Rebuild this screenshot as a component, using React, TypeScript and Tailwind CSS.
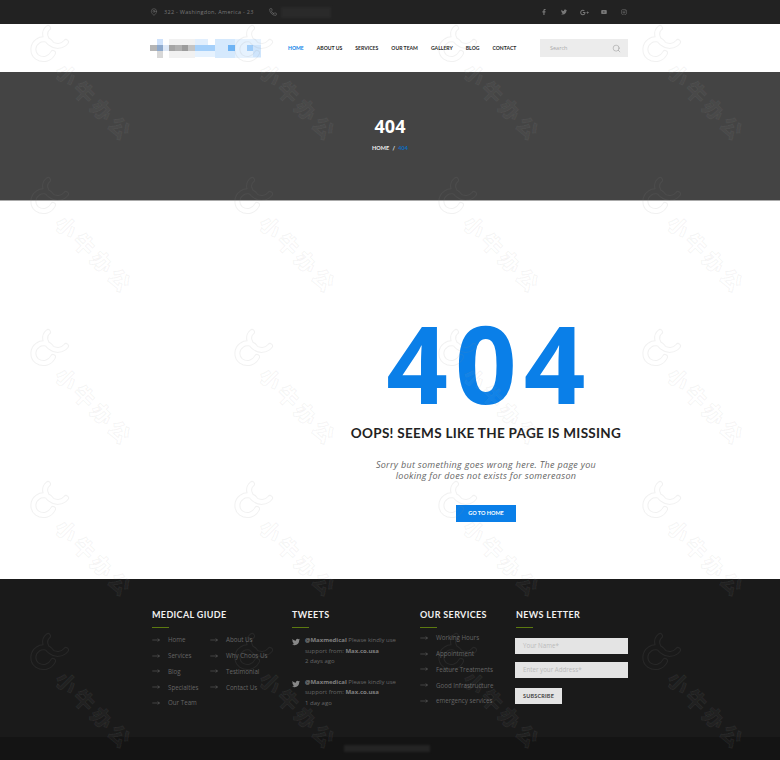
import { useId } from 'react';
import { MapPin, MoveRight, Phone, Search } from 'lucide-react';
import { FaFacebookF, FaGooglePlusG, FaInstagram, FaTwitter, FaYoutube } from 'react-icons/fa';

const NAV = ['HOME', 'ABOUT US', 'SERVICES', 'OUR TEAM', 'GALLERY', 'BLOG', 'CONTACT'];
const GUIDE_LEFT = ['Home', 'Services', 'Blog', 'Specialties', 'Our Team'];
const GUIDE_RIGHT = ['About Us', 'Why Choos Us', 'Testimonial', 'Contact Us'];
const SERVICES = ['Working Hours', 'Appointment', 'Feature Treatments', 'Good Infrastructure', 'emergency services'];
const TWEETS = ['2 days ago', '1 day ago'];

// pixelated logo, [x, y, w, h, colour]
const LOGO_BLOCKS: [number, number, number, number, string][] = [
  [7, 0, 6, 6, '#cfe2fb'],
  [7, 6, 6, 6, '#8ea9cc'],
  [7, 12, 6, 7, '#d8d8d8'],
  [0, 6, 7, 6, '#b5b5b5'],
  [13, 6, 6, 6, '#dfe9f7'],
  [19, 0, 26, 19, '#f1f1f1'],
  [19, 6, 6, 6, '#a5a5a5'],
  [25, 6, 7, 6, '#b0b0b0'],
  [32, 6, 6, 6, '#9c9c9c'],
  [38, 6, 7, 6, '#c4c4c4'],
  [45, 0, 13, 6, '#e2effd'],
  [45, 6, 20, 6, '#a5d0fa'],
  [45, 12, 20, 6, '#e6f2fe'],
  [65, 0, 20, 19, '#d5e9fd'],
  [78, 6, 7, 6, '#6eb4f5'],
  [85, 0, 26, 19, '#e6f2fe'],
  [97, 6, 6, 6, '#a0cdf9'],
  [103, 6, 8, 12, '#cfe5fc'],
];

const MARK_PATH = 'M27 10C22 14 24 21 29 25 34 29 41 29 45 24M30 25C27 21 21 20 17 23 11 27 11 35 16 39 22 43 29 41 32 35';

function Logo() {
  return (
    <svg width="111" height="19" viewBox="0 0 111 19" shapeRendering="crispEdges">
      {LOGO_BLOCKS.map(([x, y, w, h, c], i) => (
        <rect key={i} x={x} y={y} width={w} height={h} fill={c} />
      ))}
    </svg>
  );
}

function Watermark() {
  const id = useId();
  return (
    <div className="relative h-[152px] w-[204px]">
      <svg className="absolute left-0 top-0" width="50" height="50" viewBox="0 0 50 50" fill="none">
        <mask id={id} maskUnits="userSpaceOnUse" x="0" y="0" width="50" height="50">
          <path d={MARK_PATH} stroke="#fff" strokeWidth="6" strokeLinecap="round" />
          <path d={MARK_PATH} stroke="#000" strokeWidth="4" strokeLinecap="round" />
        </mask>
        <rect width="50" height="50" fill="rgb(140,140,140)" fillOpacity="0.12" mask={`url(#${id})`} />
      </svg>
      <span className="absolute left-[24px] top-[73px] rotate-45 whitespace-nowrap font-['Noto_Sans_CJK_SC',sans-serif] text-[21px] font-black leading-[22px] tracking-[4px] text-[rgba(255,255,255,0.05)] [-webkit-text-stroke:1px_rgba(140,140,140,0.09)]">
        小牛办公
      </span>
    </div>
  );
}

function FooterTitle({ children }: { children: string }) {
  return (
    <div>
      <h4 className="font-['Lato',sans-serif] text-[9px] font-bold leading-[14px] tracking-[0.35px] text-[#f0f0f0]">{children}</h4>
      <div className="mt-[5px] h-px w-[17px] bg-[#5c7a10]" />
    </div>
  );
}

function LinkRow({ label }: { label: string }) {
  return (
    <li className="flex h-[15.8px] items-center gap-[8px] font-['Open_Sans',sans-serif] text-[6.2px] text-[#666]">
      <MoveRight size={8} strokeWidth={1} className="w-[8px] text-[#999]" />
      <span className="whitespace-nowrap">{label}</span>
    </li>
  );
}

export default function App() {
  return (
    <div className="relative h-[760px] w-[780px] overflow-hidden bg-white">
      {/* top bar */}
      <div className="flex h-[24px] items-center bg-[#222222] pl-[150px] pr-[146px]">
        <MapPin size={8} strokeWidth={1.2} className="text-[#8a8a8a]" />
        <span className="ml-[6px] font-['Open_Sans',sans-serif] text-[5.5px] tracking-[0.3px] text-[#777]">322 - Washingdon, America - 23</span>
        <Phone size={8} strokeWidth={1.5} className="ml-[15px] text-[#8a8a8a]" />
        <div className="ml-[4px] h-[11px] w-[50px] bg-[#2a2a2a] blur-[1px]" />
        <div className="ml-auto flex items-center text-[#777]">
          <span className="flex w-[20px] justify-center"><FaFacebookF size={6} /></span>
          <span className="flex w-[20px] justify-center"><FaTwitter size={6} /></span>
          <span className="flex w-[20px] justify-center"><FaGooglePlusG size={9} /></span>
          <span className="flex w-[20px] justify-center"><FaYoutube size={6} /></span>
          <span className="flex w-[20px] justify-center"><FaInstagram size={6} /></span>
        </div>
      </div>

      {/* nav */}
      <header className="flex h-[48px] items-center pl-[150px] pr-[152px]">
        <Logo />
        <nav className="ml-[27px] mt-[2px] flex items-center gap-[13px] font-['Lato',sans-serif] text-[5.1px] font-bold text-[#2a2a2a]">
          {NAV.map((item, i) => (
            <a key={item} className={i === 0 ? 'text-[#0a7fe8]' : ''}>
              {item}
            </a>
          ))}
        </nav>
        <div className="ml-auto flex h-[18px] w-[88px] items-center justify-between bg-[#ececec] pl-[10px] pr-[7px]">
          <span className="font-['Open_Sans',sans-serif] text-[5.5px] text-[#aaa]">Search</span>
          <Search size={9} strokeWidth={1} className="text-[#777]" />
        </div>
      </header>

      {/* page title */}
      <section className="flex h-[129px] flex-col items-center border-b border-[#aaa] bg-[#444444] pt-[44px]">
        <h1 className="font-['Open_Sans',sans-serif] text-[18px] font-bold leading-[20px] text-white">404</h1>
        <p className="mt-[8px] font-['Lato',sans-serif] text-[5.5px] font-bold leading-[8px] text-[#eee]">
          HOME <span className="mx-[2px]">/</span> <span className="text-[#0a6fc8]">404</span>
        </p>
      </section>

      {/* error message */}
      <main className="flex h-[378px] flex-col items-center pl-[192px] pt-[107px]">
        <div className="ml-[7px] font-['Open_Sans',sans-serif] text-[108px] font-bold leading-[110px] tracking-[7px] text-[#0a7fe8]">404</div>
        <h2 className="mt-[6px] whitespace-nowrap font-['Lato',sans-serif] text-[13.5px] font-bold leading-[18px] tracking-[0.3px] text-[#222]">
          OOPS! SEEMS LIKE THE PAGE IS MISSING
        </h2>
        <p className="mt-[17px] text-center font-['Open_Sans',sans-serif] text-[9px] italic leading-[11px] tracking-[0.3px] text-[#666]">
          Sorry but something goes wrong here. The page you
          <br />
          looking for does not exists for somereason
        </p>
        <button className="mt-[24px] flex h-[17px] w-[60px] items-center justify-center bg-[#0a7fe8] font-['Lato',sans-serif] text-[5.5px] font-bold text-white">
          GO TO HOME
        </button>
      </main>

      {/* footer */}
      <footer className="flex h-[158px] bg-[#1a1a1a] pl-[152px] pt-[29px]">
        <div className="w-[140px]">
          <FooterTitle>MEDICAL GIUDE</FooterTitle>
          <div className="mt-[4px] flex">
            <ul className="w-[58px]">
              {GUIDE_LEFT.map((l) => (
                <LinkRow key={l} label={l} />
              ))}
            </ul>
            <ul>
              {GUIDE_RIGHT.map((l) => (
                <LinkRow key={l} label={l} />
              ))}
            </ul>
          </div>
        </div>

        <div className="w-[128px]">
          <FooterTitle>TWEETS</FooterTitle>
          <div className="mt-[7px] flex flex-col gap-[10px]">
            {TWEETS.map((ago) => (
              <div key={ago} className="flex gap-[5px]">
                <FaTwitter size={8} className="mt-[3px] text-[#888]" />
                <p className="w-[100px] font-['Open_Sans',sans-serif] text-[6px] leading-[10.6px] text-[#666]">
                  <b className="text-[#808080]">@Maxmedical</b> Please kindly use
                  <br />
                  support from: <b className="text-[#808080]">Max.co.usa</b>
                  <br />
                  {ago}
                </p>
              </div>
            ))}
          </div>
        </div>

        <div className="w-[95px]">
          <FooterTitle>OUR SERVICES</FooterTitle>
          <ul className="mt-[2px]">
            {SERVICES.map((l) => (
              <LinkRow key={l} label={l} />
            ))}
          </ul>
        </div>

        <div className="w-[100px]">
          <div className="pl-px">
            <FooterTitle>NEWS LETTER</FooterTitle>
          </div>
          <div className="mt-[10px] flex h-[16px] w-[113px] items-center bg-[#e4e4e4] pl-[8px] font-['Open_Sans',sans-serif] text-[6.2px] text-[#bbb]">Your Name*</div>
          <div className="mt-[8px] flex h-[16px] w-[113px] items-center bg-[#e4e4e4] pl-[8px] font-['Open_Sans',sans-serif] text-[6.2px] text-[#bbb]">Enter your Address*</div>
          <button className="mt-[10px] flex h-[16px] w-[47px] items-center justify-center bg-[#e4e4e4] font-['Lato',sans-serif] text-[5.5px] font-bold tracking-[0.2px] text-[#444]">SUBSCRIBE</button>
        </div>
      </footer>

      {/* copyright bar */}
      <div className="flex h-[23px] items-center justify-center bg-[#141414]">
        <div className="ml-[-7px] h-[7px] w-[86px] bg-[#242424] blur-[1px]" />
      </div>

      {/* stock photo watermark */}
      <div className="pointer-events-none absolute inset-0 grid auto-rows-[152px] grid-cols-[repeat(4,204px)] pl-[21px] pt-[18px]">
        {Array.from({ length: 20 }).map((_, i) => (
          <Watermark key={i} />
        ))}
      </div>
    </div>
  );
}
